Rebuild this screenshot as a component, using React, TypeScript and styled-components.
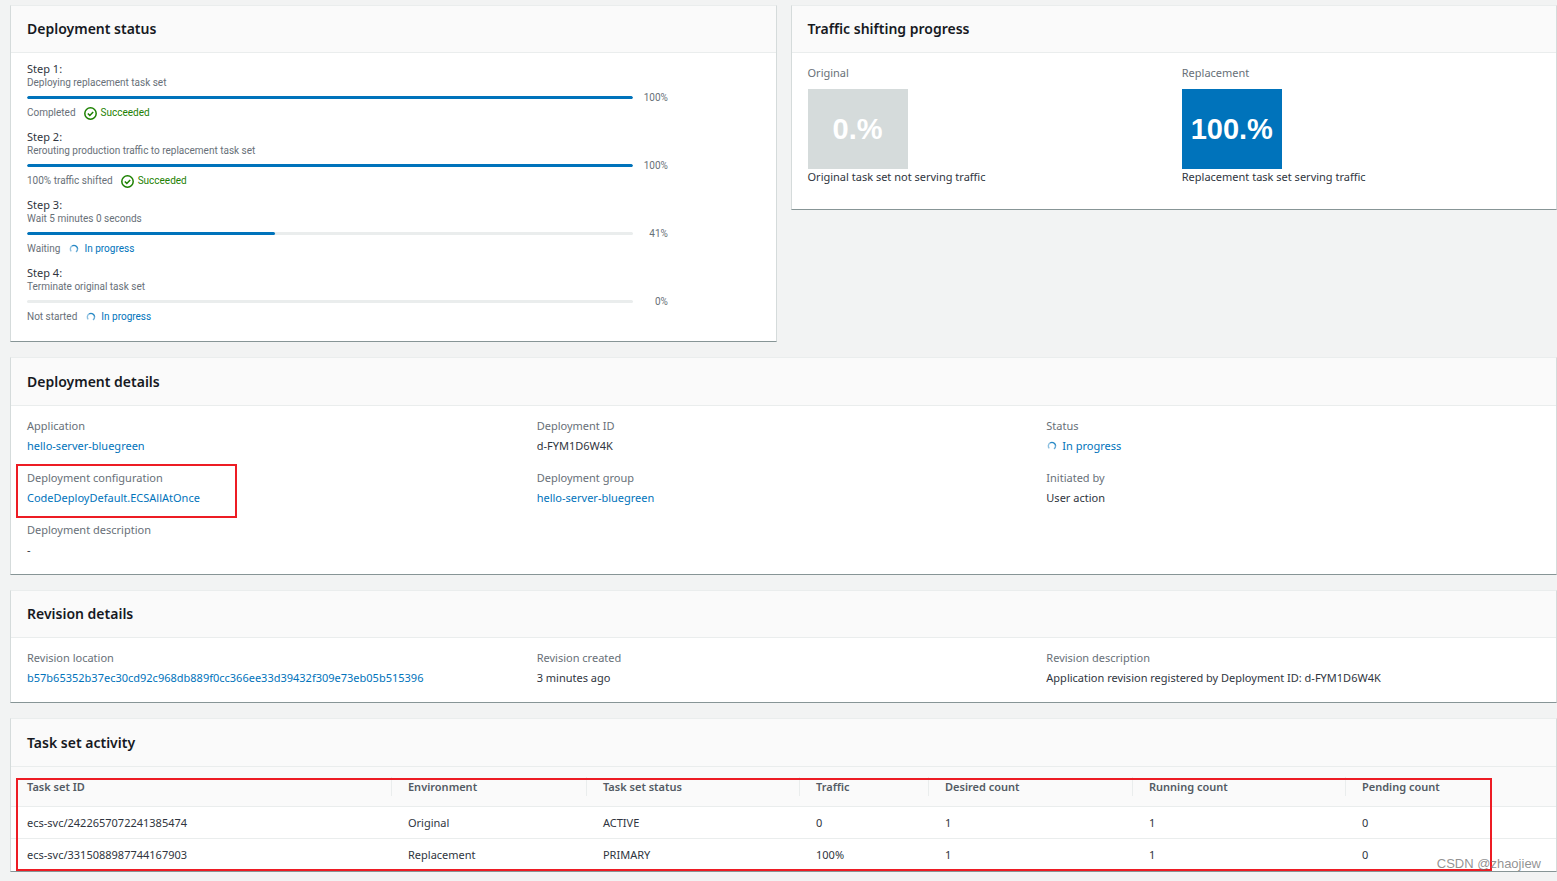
import React from "react";
import styled, { createGlobalStyle, css } from "styled-components";

const colors = {
  page: "#f2f3f3",
  header: "#fafafa",
  line: "#eaeded",
  side: "#d5dbdb",
  bottom: "#879596",
  text: "#16191f",
  body: "#2f3540",
  muted: "#687078",
  link: "#0073bb",
  success: "#1d8102",
  highlight: "#ed1c24",
};

const GlobalStyle = createGlobalStyle`
  *, *::before, *::after { box-sizing: border-box; }
  body {
    margin: 0;
    background: ${colors.page};
    color: ${colors.body};
    font-family: "Noto Sans", "Open Sans", sans-serif;
    font-size: 11px;
    line-height: 16px;
  }
`;

const Page = styled.main`
  position: relative;
  display: flex;
  flex-direction: column;
  gap: 15px;
  min-height: 100vh;
  padding: 5px 0 9px 10px;
`;

const TopRow = styled.div`
  display: grid;
  grid-template-columns: 1fr 1fr;
  align-items: start;
  gap: 14px;
`;

const Card = styled.section`
  background: #fff;
  border: 1px solid ${colors.side};
  border-top-color: ${colors.line};
  border-bottom-color: ${colors.bottom};
`;

const CardHeader = styled.header<{ $tall?: boolean }>`
  display: flex;
  align-items: center;
  height: ${(p) => (p.$tall ? 48 : 47)}px;
  padding: 0 16px;
  background: ${colors.header};
  border-bottom: 1px solid ${colors.line};
`;

const CardTitle = styled.h2`
  margin: 0;
  color: ${colors.text};
  font-size: 14px;
  line-height: 20px;
  font-weight: 600;
`;

const CardBody = styled.div`
  padding: 12px 16px 16px;
`;

const StepList = styled.ol`
  display: flex;
  flex-direction: column;
  gap: 9px;
  margin: 0;
  padding: 9px 16px 16px;
  list-style: none;
`;

const smallText = css`
  font-family: Roboto, "Noto Sans", sans-serif;
  font-size: 10px;
`;

const StepName = styled.div`
  line-height: 13px;
`;

const StepText = styled.div`
  ${smallText}
  color: ${colors.muted};
  line-height: 16px;
`;

const ProgressRow = styled.div`
  display: flex;
  align-items: center;
  width: 87.5%;
  height: 13px;
  margin-bottom: 1px;
`;

const Track = styled.div`
  flex: 1;
  height: 3px;
  overflow: hidden;
  background: ${colors.line};
  border-radius: 2px;
`;

const Fill = styled.div`
  height: 100%;
  background: ${colors.link};
  border-radius: 2px;
`;

const Percent = styled.span`
  ${smallText}
  width: 35px;
  color: ${colors.muted};
  line-height: 13px;
  text-align: right;
`;

const StepStatus = styled.div`
  ${smallText}
  display: flex;
  align-items: center;
  gap: 8px;
  height: 16px;
  color: ${colors.muted};
`;

const Status = styled.span<{ $done?: boolean }>`
  display: flex;
  align-items: center;
  gap: 4px;
  color: ${(p) => (p.$done ? colors.success : colors.link)};
`;

const TrafficGrid = styled.div`
  display: grid;
  grid-template-columns: 1fr 1fr;
  gap: 16px;
  padding: 12px 16px 24px;
`;

const Label = styled.div`
  color: ${colors.muted};
`;

const TrafficTile = styled.div<{ $active?: boolean }>`
  display: flex;
  align-items: center;
  justify-content: center;
  width: 100px;
  height: 80px;
  margin-top: 8px;
  background: ${(p) => (p.$active ? colors.link : colors.side)};
  color: #fff;
  font-family: "Liberation Sans", Arial, sans-serif;
  font-size: 29px;
  line-height: 32px;
  font-weight: 700;
`;

const FieldGrid = styled.dl`
  display: grid;
  grid-template-columns: repeat(3, 1fr);
  gap: 16px;
  margin: 0;
`;

const Field = styled.div`
  position: relative;
`;

const FieldLabel = styled.dt`
  color: ${colors.muted};
`;

const FieldValue = styled.dd`
  margin: 4px 0 0;
`;

const Link = styled.a`
  color: ${colors.link};
  text-decoration: none;
`;

const highlightBox = css`
  position: absolute;
  border: 2px solid ${colors.highlight};
  pointer-events: none;
`;

const FieldHighlight = styled.span`
  ${highlightBox}
  top: -6px;
  bottom: -12px;
  left: -11px;
  width: 221px;
`;

const TableHighlight = styled.div`
  ${highlightBox}
  top: 11px;
  right: 64px;
  bottom: 0;
  left: 5px;
`;

const TableWrap = styled.div`
  position: relative;
`;

const Table = styled.table`
  width: 100%;
  table-layout: fixed;
  border-collapse: separate;
  border-spacing: 0;
`;

const Column = styled.col<{ $share: number }>`
  width: ${(p) => p.$share}%;
`;

const HeadCell = styled.th`
  height: 40px;
  padding: 10px 0;
  background: ${colors.header};
  border-bottom: 1px solid ${colors.line};
  color: #545b64;
  font-weight: 600;
  text-align: left;
  vertical-align: top;
`;

const HeadLabel = styled.div`
  height: 19px;
  padding: 2px 16px 0;
  line-height: 16px;
  ${HeadCell}:not(:last-child) > & {
    border-right: 1px solid ${colors.line};
  }
`;

const Cell = styled.td`
  height: 32px;
  padding: 0 16px;
  tr:not(:last-child) > & {
    border-bottom: 1px solid ${colors.line};
  }
`;

const Watermark = styled.div`
  position: absolute;
  right: 16px;
  bottom: 9px;
  color: rgba(110, 110, 110, 0.75);
  font-family: "Liberation Sans", Arial, sans-serif;
  font-size: 13px;
`;

const CheckIcon = () => (
  <svg width="13" height="13" viewBox="0 0 13 13" fill="none" stroke="currentColor" aria-hidden="true">
    <circle cx="6.5" cy="6.5" r="5.7" strokeWidth="1.5" />
    <path d="M3.8 6.5 5.8 8.4 9.2 4.9" strokeWidth="1.5" />
  </svg>
);

const SpinnerIcon = () => (
  <svg width="12" height="12" viewBox="0 0 12 12" fill="none" stroke="currentColor" aria-hidden="true">
    <path d="M3.2 8.4A3.6 3.6 0 0 1 4.2 2.9" strokeWidth="1.4" opacity="0.45" />
    <path d="M4.2 2.9A3.6 3.6 0 0 1 9.6 5.8" strokeWidth="1.4" opacity="0.85" />
    <path d="M9.6 5.8A3.6 3.6 0 0 1 8 8.9" strokeWidth="1.4" opacity="0.6" />
  </svg>
);

const StatusIndicator = ({ done }: { done?: boolean }) => (
  <Status $done={done}>
    {done ? <CheckIcon /> : <SpinnerIcon />}
    {done ? "Succeeded" : "In progress"}
  </Status>
);

const steps = [
  { text: "Deploying replacement task set", percent: 100, state: "Completed", done: true },
  { text: "Rerouting production traffic to replacement task set", percent: 100, state: "100% traffic shifted", done: true },
  { text: "Wait 5 minutes 0 seconds", percent: 41, state: "Waiting", done: false },
  { text: "Terminate original task set", percent: 0, state: "Not started", done: false },
];

type FieldData = { label: string; value: React.ReactNode; highlighted?: boolean };

const deploymentFields: FieldData[] = [
  { label: "Application", value: <Link href="#application">hello-server-bluegreen</Link> },
  { label: "Deployment ID", value: "d-FYM1D6W4K" },
  { label: "Status", value: <StatusIndicator /> },
  {
    label: "Deployment configuration",
    value: <Link href="#configuration">CodeDeployDefault.ECSAllAtOnce</Link>,
    highlighted: true,
  },
  { label: "Deployment group", value: <Link href="#group">hello-server-bluegreen</Link> },
  { label: "Initiated by", value: "User action" },
  { label: "Deployment description", value: "-" },
];

const revisionFields: FieldData[] = [
  {
    label: "Revision location",
    value: <Link href="#revision">b57b65352b37ec30cd92c968db889f0cc366ee33d39432f309e73eb05b515396</Link>,
  },
  { label: "Revision created", value: "3 minutes ago" },
  { label: "Revision description", value: "Application revision registered by Deployment ID: d-FYM1D6W4K" },
];

const columns = [
  { name: "Task set ID", share: 24.66 },
  { name: "Environment", share: 12.62 },
  { name: "Task set status", share: 13.79 },
  { name: "Traffic", share: 8.35 },
  { name: "Desired count", share: 13.2 },
  { name: "Running count", share: 13.79 },
  { name: "Pending count", share: 13.59 },
];

const rows = [
  ["ecs-svc/2422657072241385474", "Original", "ACTIVE", "0", "1", "1", "0"],
  ["ecs-svc/3315088987744167903", "Replacement", "PRIMARY", "100%", "1", "1", "0"],
];

const Fields = ({ items }: { items: FieldData[] }) => (
  <FieldGrid>
    {items.map((item) => (
      <Field key={item.label}>
        <FieldLabel>{item.label}</FieldLabel>
        <FieldValue>
          {item.value}
          {item.highlighted && <FieldHighlight />}
        </FieldValue>
      </Field>
    ))}
  </FieldGrid>
);

export default function App() {
  return (
    <>
      <GlobalStyle />
      <Page>
        <TopRow>
          <Card>
            <CardHeader>
              <CardTitle>Deployment status</CardTitle>
            </CardHeader>
            <StepList>
              {steps.map((step, i) => (
                <li key={step.text}>
                  <StepName>{`Step ${i + 1}:`}</StepName>
                  <StepText>{step.text}</StepText>
                  <ProgressRow>
                    <Track
                      role="progressbar"
                      aria-label={step.text}
                      aria-valuenow={step.percent}
                      aria-valuemin={0}
                      aria-valuemax={100}
                    >
                      <Fill style={{ width: `${step.percent}%` }} />
                    </Track>
                    <Percent>{`${step.percent}%`}</Percent>
                  </ProgressRow>
                  <StepStatus>
                    <span>{step.state}</span>
                    <StatusIndicator done={step.done} />
                  </StepStatus>
                </li>
              ))}
            </StepList>
          </Card>
          <Card>
            <CardHeader>
              <CardTitle>Traffic shifting progress</CardTitle>
            </CardHeader>
            <TrafficGrid>
              <div>
                <Label>Original</Label>
                <TrafficTile>0.%</TrafficTile>
                <div>Original task set not serving traffic</div>
              </div>
              <div>
                <Label>Replacement</Label>
                <TrafficTile $active>100.%</TrafficTile>
                <div>Replacement task set serving traffic</div>
              </div>
            </TrafficGrid>
          </Card>
        </TopRow>
        <Card>
          <CardHeader $tall>
            <CardTitle>Deployment details</CardTitle>
          </CardHeader>
          <CardBody>
            <Fields items={deploymentFields} />
          </CardBody>
        </Card>
        <Card>
          <CardHeader>
            <CardTitle>Revision details</CardTitle>
          </CardHeader>
          <CardBody>
            <Fields items={revisionFields} />
          </CardBody>
        </Card>
        <Card>
          <CardHeader $tall>
            <CardTitle>Task set activity</CardTitle>
          </CardHeader>
          <TableWrap>
            <Table aria-label="Task set activity">
              <colgroup>
                {columns.map((column) => (
                  <Column key={column.name} $share={column.share} />
                ))}
              </colgroup>
              <thead>
                <tr>
                  {columns.map((column) => (
                    <HeadCell key={column.name} scope="col">
                      <HeadLabel>{column.name}</HeadLabel>
                    </HeadCell>
                  ))}
                </tr>
              </thead>
              <tbody>
                {rows.map((row) => (
                  <tr key={row[0]}>
                    {row.map((value, i) => (
                      <Cell key={columns[i].name}>{value}</Cell>
                    ))}
                  </tr>
                ))}
              </tbody>
            </Table>
            <TableHighlight />
          </TableWrap>
        </Card>
        <Watermark>CSDN @zhaojiew</Watermark>
      </Page>
    </>
  );
}
